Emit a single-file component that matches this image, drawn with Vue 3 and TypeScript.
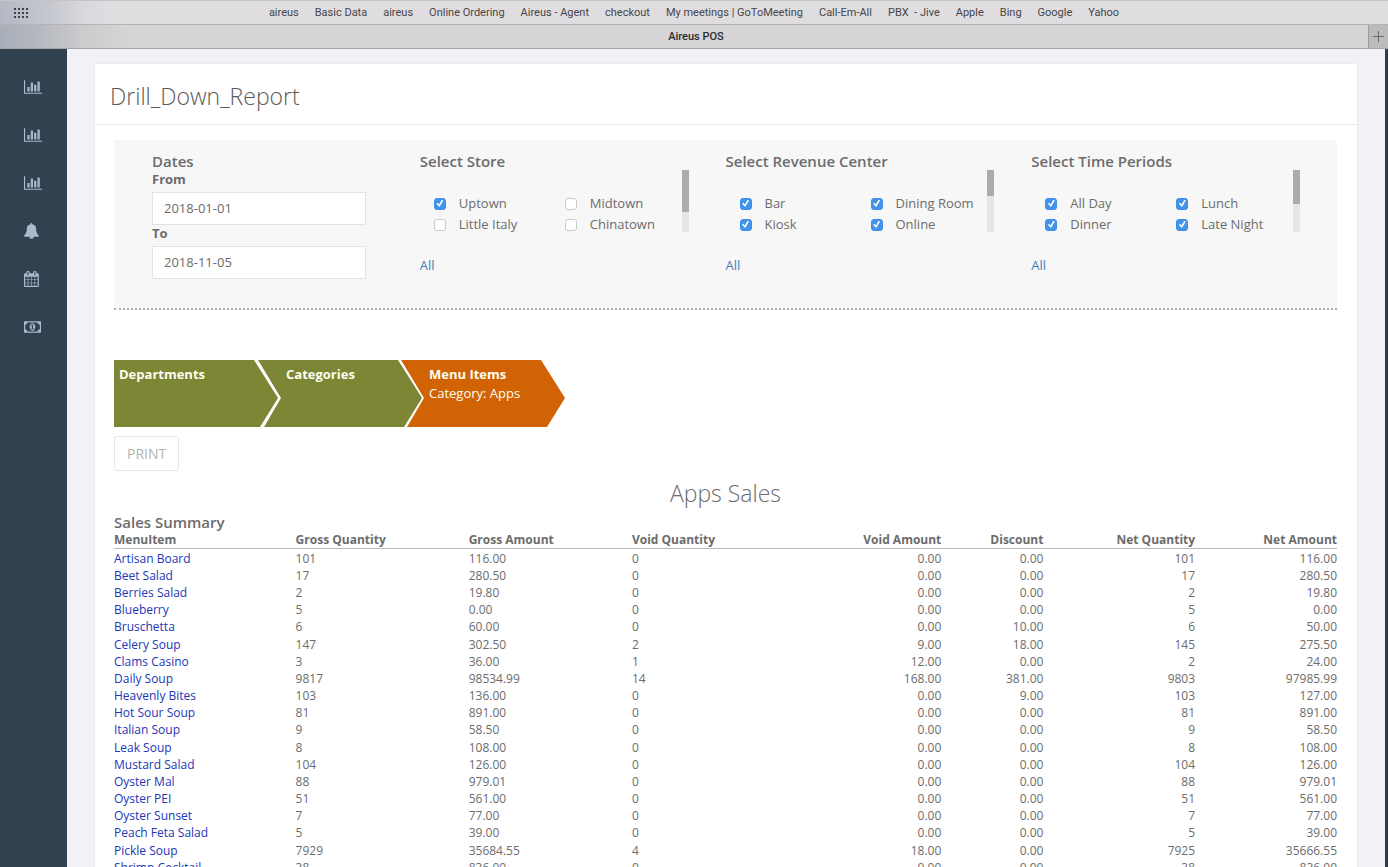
<script setup lang="ts">
import { ref } from 'vue'

interface Option {
  label: string
  checked: boolean
}
interface FilterGroup {
  id: string
  title: string
  thumb: number
  options: Option[]
}
interface NavItem {
  label: string
  width: number
  viewBox: string
  path: string
}

const bookmarks: string[] = [
  'aireus', 'Basic Data', 'aireus', 'Online Ordering', 'Aireus - Agent', 'checkout',
  'My meetings | GoToMeeting', 'Call-Em-All', 'PBX  - Jive', 'Apple', 'Bing', 'Google', 'Yahoo',
]

const chartPath =
  'M640 896v512h-256v-512h256zm384-512v1024h-256v-1024h256zm1024 1152v128h-2048v-1536h128v1408h1920zm-640-896v768h-256v-768h256zm384-384v1152h-256v-1152h256z'
const bellPath =
  'M912 1696q0-16-16-16-59 0-101.5-42.5t-42.5-101.5q0-16-16-16t-16 16q0 73 51.5 124.5t124.5 51.5q16 0 16-16zm816-288q0 52-38 90t-90 38h-448q0 106-75 181t-181 75-181-75-75-181h-448q-52 0-90-38t-38-90q50-42 91-88t85-119.5 74.5-158.5 50-206 19.5-260q0-152 117-282.5t307-158.5q-8-19-8-39 0-40 28-68t68-28 68 28 28 68q0 20-8 39 190 28 307 158.5t117 282.5q0 139 19.5 260t50 206 74.5 158.5 85 119.5 91 88z'
const calendarPath =
  'M192 1664h288v-288h-288v288zm352 0h320v-288h-320v288zm-352-352h288v-320h-288v320zm352 0h320v-320h-320v320zm-352-384h288v-288h-288v288zm736 736h320v-288h-320v288zm-384-736h320v-288h-320v288zm768 736h288v-288h-288v288zm-384-352h320v-320h-320v320zm-352-864v-288q0-13-9.5-22.5t-22.5-9.5h-64q-13 0-22.5 9.5t-9.5 22.5v288q0 13 9.5 22.5t22.5 9.5h64q13 0 22.5-9.5t9.5-22.5zm736 864h288v-320h-288v320zm-384-384h320v-288h-320v288zm384 0h288v-288h-288v288zm32-480v-288q0-13-9.5-22.5t-22.5-9.5h-64q-13 0-22.5 9.5t-9.5 22.5v288q0 13 9.5 22.5t22.5 9.5h64q13 0 22.5-9.5t9.5-22.5zm384-64v1280q0 52-38 90t-90 38h-1408q-52 0-90-38t-38-90v-1280q0-52 38-90t90-38h128v-96q0-66 47-113t113-47h64q66 0 113 47t47 113v96h384v-96q0-66 47-113t113-47h64q66 0 113 47t47 113v96h128q52 0 90 38t38 90z'
const moneyPath =
  'M768 1152h384v-96h-128v-448h-114l-148 137 77 80q42-37 55-57h2v288h-128v96zm512-256q0 70-21 142t-59.5 134-101.5 101-138 39-138-39-101.5-101-59.5-134-21-142 21-142 59.5-134 101.5-101 138-39 138 39 101.5 101 59.5 134 21 142zm512 256v-512q-106 0-181-75t-75-181h-1152q0 106-75 181t-181 75v512q106 0 181 75t75 181h1152q0-106 75-181t181-75zm128-832v1152q0 26-19 45t-45 19h-1792q-26 0-45-19t-19-45v-1152q0-26 19-45t45-19h1792q26 0 45 19t19 45z'

const nav: NavItem[] = [
  { label: 'Sales reports', width: 18, viewBox: '0 0 2048 1792', path: chartPath },
  { label: 'Labor reports', width: 18, viewBox: '0 0 2048 1792', path: chartPath },
  { label: 'Store reports', width: 18, viewBox: '0 0 2048 1792', path: chartPath },
  { label: 'Alerts', width: 16, viewBox: '64 0 1792 1792', path: bellPath },
  { label: 'Calendar', width: 16, viewBox: '64 0 1792 1792', path: calendarPath },
  { label: 'Payments', width: 17, viewBox: '0 0 1920 1792', path: moneyPath },
]

const from = ref('2018-01-01')
const to = ref('2018-11-05')

const groups = ref<FilterGroup[]>([
  {
    id: 'store',
    title: 'Select Store',
    thumb: 42,
    options: [
      { label: 'Uptown', checked: true },
      { label: 'Midtown', checked: false },
      { label: 'Little Italy', checked: false },
      { label: 'Chinatown', checked: false },
    ],
  },
  {
    id: 'revenue',
    title: 'Select Revenue Center',
    thumb: 26,
    options: [
      { label: 'Bar', checked: true },
      { label: 'Dining Room', checked: true },
      { label: 'Kiosk', checked: true },
      { label: 'Online', checked: true },
    ],
  },
  {
    id: 'period',
    title: 'Select Time Periods',
    thumb: 34,
    options: [
      { label: 'All Day', checked: true },
      { label: 'Lunch', checked: true },
      { label: 'Dinner', checked: true },
      { label: 'Late Night', checked: true },
    ],
  },
])

function selectAll(group: FilterGroup): void {
  group.options.forEach((o) => (o.checked = true))
}

const headers: string[] = [
  'MenuItem', 'Gross Quantity', 'Gross Amount', 'Void Quantity',
  'Void Amount', 'Discount', 'Net Quantity', 'Net Amount',
]

const rows: string[][] = [
  ['Artisan Board', '101', '116.00', '0', '0.00', '0.00', '101', '116.00'],
  ['Beet Salad', '17', '280.50', '0', '0.00', '0.00', '17', '280.50'],
  ['Berries Salad', '2', '19.80', '0', '0.00', '0.00', '2', '19.80'],
  ['Blueberry', '5', '0.00', '0', '0.00', '0.00', '5', '0.00'],
  ['Bruschetta', '6', '60.00', '0', '0.00', '10.00', '6', '50.00'],
  ['Celery Soup', '147', '302.50', '2', '9.00', '18.00', '145', '275.50'],
  ['Clams Casino', '3', '36.00', '1', '12.00', '0.00', '2', '24.00'],
  ['Daily Soup', '9817', '98534.99', '14', '168.00', '381.00', '9803', '97985.99'],
  ['Heavenly Bites', '103', '136.00', '0', '0.00', '9.00', '103', '127.00'],
  ['Hot Sour Soup', '81', '891.00', '0', '0.00', '0.00', '81', '891.00'],
  ['Italian Soup', '9', '58.50', '0', '0.00', '0.00', '9', '58.50'],
  ['Leak Soup', '8', '108.00', '0', '0.00', '0.00', '8', '108.00'],
  ['Mustard Salad', '104', '126.00', '0', '0.00', '0.00', '104', '126.00'],
  ['Oyster Mal', '88', '979.01', '0', '0.00', '0.00', '88', '979.01'],
  ['Oyster PEI', '51', '561.00', '0', '0.00', '0.00', '51', '561.00'],
  ['Oyster Sunset', '7', '77.00', '0', '0.00', '0.00', '7', '77.00'],
  ['Peach Feta Salad', '5', '39.00', '0', '0.00', '0.00', '5', '39.00'],
  ['Pickle Soup', '7929', '35684.55', '4', '18.00', '0.00', '7925', '35666.55'],
  ['Shrimp Cocktail', '38', '836.00', '0', '0.00', '0.00', '38', '836.00'],
]
</script>

<template>
  <div class="window">
    <header class="chrome">
      <div class="bookmarks">
        <button class="launcher" type="button" aria-label="Show all bookmarks">
          <svg width="15" height="11" viewBox="0 0 15 11" aria-hidden="true">
            <template v-for="y in 3" :key="y">
              <rect v-for="x in 4" :key="x" :x="(x - 1) * 4" :y="(y - 1) * 4" width="2" height="2" />
            </template>
          </svg>
        </button>
        <nav class="links">
          <a v-for="(b, i) in bookmarks" :key="i" href="#">{{ b }}</a>
        </nav>
      </div>
      <div class="tabs">
        <span class="tab">Aireus POS</span>
        <button class="new-tab" type="button" aria-label="New tab">
          <svg width="11" height="11" viewBox="0 0 11 11" aria-hidden="true"><path d="M5.5 0v11M0 5.5h11" /></svg>
        </button>
      </div>
    </header>

    <div class="body">
      <nav class="sidebar">
        <a v-for="item in nav" :key="item.label" href="#" :aria-label="item.label">
          <svg :width="item.width" height="16" :viewBox="item.viewBox" aria-hidden="true">
            <path :d="item.path" />
          </svg>
        </a>
      </nav>

      <main class="content">
        <section class="card">
          <h1 class="card-title">Drill_Down_Report</h1>
          <div class="card-body">
            <form class="filters" @submit.prevent>
              <div class="dates">
                <h2>Dates</h2>
                <label for="from">From</label>
                <input id="from" v-model="from" type="text" />
                <label for="to">To</label>
                <input id="to" v-model="to" type="text" />
              </div>
              <div v-for="g in groups" :key="g.id" class="group">
                <h2>{{ g.title }}</h2>
                <div class="scroller">
                  <div class="options">
                    <label v-for="o in g.options" :key="o.label" class="option">
                      <input v-model="o.checked" type="checkbox" />
                      <span>{{ o.label }}</span>
                    </label>
                  </div>
                  <div class="track"><div class="thumb" :style="{ height: g.thumb + 'px' }"></div></div>
                </div>
                <a class="all" href="#" @click.prevent="selectAll(g)">All</a>
              </div>
            </form>

            <ol class="steps">
              <li class="step first"><b>Departments</b></li>
              <li class="step"><b>Categories</b></li>
              <li class="step current"><b>Menu Items</b><span>Category: Apps</span></li>
            </ol>

            <button class="print" type="button">PRINT</button>

            <h2 class="report-title">Apps Sales</h2>
            <h3 class="summary">Sales Summary</h3>
            <table>
              <colgroup>
                <col v-for="n in 8" :key="n" :class="'c' + n" />
              </colgroup>
              <thead>
                <tr>
                  <th v-for="(h, i) in headers" :key="h" scope="col" :class="{ num: i > 3 }">{{ h }}</th>
                </tr>
              </thead>
              <tbody>
                <tr v-for="r in rows" :key="r[0]">
                  <td v-for="(c, i) in r" :key="i" :class="{ num: i > 3 }">
                    <a v-if="i === 0" href="#">{{ c }}</a>
                    <template v-else>{{ c }}</template>
                  </td>
                </tr>
              </tbody>
            </table>
          </div>
        </section>
      </main>
    </div>
  </div>
</template>

<style>
body {
  margin: 0;
  overflow: hidden;
}
</style>

<style scoped>
* {
  box-sizing: border-box;
}
.window {
  height: 100vh;
  display: flex;
  flex-direction: column;
  overflow: hidden;
  font: 13px/17px 'Open Sans', 'Noto Sans', sans-serif;
  color: #6c6c6c;
}
a {
  text-decoration: none;
}
h1,
h2,
h3 {
  margin: 0;
}

/* Browser chrome */
.chrome {
  flex: none;
  font: 11px/24px Roboto, 'Liberation Sans', sans-serif;
  color: #464548;
}
.bookmarks {
  display: grid;
  grid-template-columns: 40px 1fr 40px;
  height: 25px;
  align-items: center;
  border-top: 1px solid #c6c3c7;
  border-bottom: 1px solid #b5b3b6;
  background: linear-gradient(90deg, #b3b8c3 0, #c3c6cd 45px, #dad8dd 85px, #e0dde1 110px, #e0dde1 100%);
}
.launcher {
  display: flex;
  padding: 0 0 0 14px;
  border: 0;
  background: none;
}
.launcher rect {
  fill: #3d4048;
}
.links {
  display: flex;
  justify-content: center;
  gap: 16px;
  white-space: pre;
}
.links a {
  color: inherit;
}
.tabs {
  display: flex;
  height: 24px;
  border-bottom: 1px solid #a3a2a5;
  background: linear-gradient(90deg, #a9afb9 0, #b5b9c0 40px, #cbcacd 80px, #d6d4d7 130px, #d6d4d7 100%);
}
.tab {
  flex: 1;
  padding-left: 24px;
  text-align: center;
  font-weight: 500;
  color: #2c2c2e;
}
.new-tab {
  display: flex;
  align-items: center;
  justify-content: center;
  width: 20px;
  padding: 0;
  border: 0;
  border-left: 1px solid #9c9b9e;
  background: #bcbabd;
}
.new-tab path {
  stroke: #6c6b6e;
  stroke-width: 1;
}

/* Shell */
.body {
  flex: 1;
  min-height: 0;
  display: flex;
  border-right: 3px solid #303b4c;
}
.sidebar {
  flex: none;
  width: 67px;
  padding-top: 14px;
  background: #314150;
}
.sidebar a {
  display: flex;
  align-items: center;
  height: 48px;
  padding-left: 24px;
}
.sidebar path {
  fill: #a9bacb;
}
.content {
  flex: 1;
  min-width: 0;
  padding: 15px 28px 0;
  overflow: hidden;
  background: #f1f2f5;
}
.card {
  background: #fff;
  box-shadow: 0 0 2px #e2e3e8;
}
.card-title {
  padding: 16px 15px 12px;
  border-bottom: 1px solid #e8eaee;
  font-size: 23px;
  line-height: 32px;
  font-weight: 300;
  color: #5a5a5a;
}
.card-body {
  padding: 15px 20px 20px 19px;
}

/* Filters */
.filters {
  display: grid;
  grid-template-columns: repeat(4, 1fr);
  padding: 12px 0 29px;
  border-bottom: 2px dotted #b0b0b0;
  background: #f7f7f7;
}
.filters h2 {
  font-size: 15px;
  line-height: 19px;
  font-weight: 600;
}
.dates {
  display: flex;
  flex-direction: column;
  padding: 0 54px 0 38px;
}
.dates label {
  line-height: 17px;
  font-weight: 700;
}
.dates input {
  height: 33px;
  margin: 4px 0 0;
  padding: 0 11px 2px;
  border: 1px solid #e3e3e3;
  background: #fff;
  font: inherit;
  color: inherit;
}
.group {
  padding-right: 37px;
}
.group h2 {
  height: 18px;
}
.scroller {
  display: flex;
  height: 62px;
}
.options {
  flex: 1;
  display: grid;
  grid-template-columns: 131px 1fr;
  grid-auto-rows: 21px;
  padding: 23px 0 0 14px;
}
.option {
  display: flex;
  align-items: center;
  gap: 13px;
  white-space: nowrap;
}
.option input {
  appearance: none;
  flex: none;
  display: grid;
  place-content: center;
  width: 12px;
  height: 12px;
  margin: 0;
  border: 1px solid #c9c9c9;
  border-radius: 3px;
  background: #fff;
}
.option input:checked {
  border-color: #3d8fe6;
  background: #4294ea;
}
.option input:checked::before {
  content: '';
  width: 8px;
  height: 8px;
  background: #fff;
  clip-path: polygon(8% 52%, 24% 40%, 42% 62%, 76% 4%, 94% 14%, 46% 94%);
}
.track {
  width: 7px;
  background: #e6e6e6;
}
.thumb {
  background: #acacac;
}
.all {
  display: inline-block;
  margin-top: 25px;
  color: #3f80b5;
}

/* Drill-down path */
.steps {
  display: flex;
  margin: 50px 0 9px;
  padding: 0;
  list-style: none;
}
.step {
  display: flex;
  flex-direction: column;
  width: 164px;
  height: 67px;
  margin-left: -21px;
  padding: 5px 0 0 28px;
  line-height: 19px;
  color: #fdfdf0;
  background: #7c8634;
  clip-path: polygon(0 0, calc(100% - 24px) 0, 100% 38px, calc(100% - 18px) 100%, 6px 100%, 23px 38px);
}
.step.first {
  width: 165px;
  margin-left: 0;
  padding-left: 5px;
  clip-path: polygon(0 0, calc(100% - 25px) 0, calc(100% - 1px) 38px, calc(100% - 19px) 100%, 0 100%);
}
.step.current {
  background: #d26304;
}
.print {
  display: block;
  height: 35px;
  padding: 0 12px;
  border: 1px solid #e6e6e6;
  border-radius: 3px;
  background: #fff;
  font: inherit;
  font-size: 14px;
  color: #b3b3b3;
}

/* Report */
.report-title {
  margin-top: 6px;
  text-align: center;
  font-size: 23px;
  line-height: 32px;
  font-weight: 300;
}
.summary {
  margin-top: 4px;
  font-size: 15px;
  line-height: 18px;
  font-weight: 600;
}
table {
  width: 100%;
  table-layout: fixed;
  border-collapse: separate;
  border-spacing: 0;
  font-size: 12px;
}
.c1 { width: 14.85%; }
.c2 { width: 14.15%; }
.c3 { width: 13.35%; }
.c4 { width: 12.3%; }
.c5 { width: 13%; }
.c6 { width: 8.35%; }
.c7 { width: 12.4%; }
.c8 { width: 11.6%; }
th,
td {
  height: 17px;
  padding: 0;
  text-align: left;
  white-space: nowrap;
}
th {
  border-bottom: 1px solid #b9b9b9;
}
tbody tr:first-child td,
tbody tr:nth-child(6n) td {
  height: 18px;
}
td a {
  color: #2236b8;
}
.num {
  text-align: right;
}
</style>
